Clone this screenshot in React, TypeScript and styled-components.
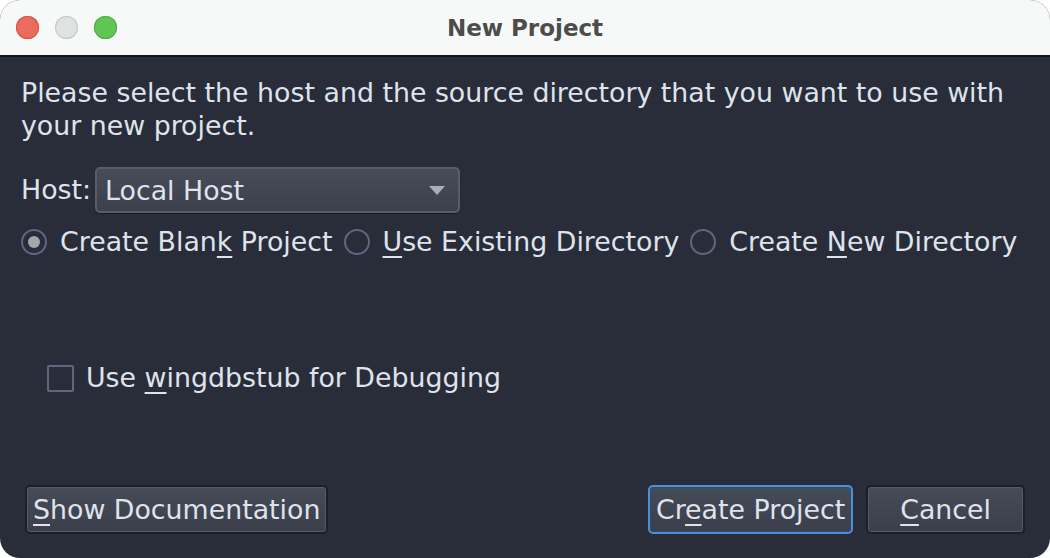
import React from "react";
import styled, { createGlobalStyle, css } from "styled-components";

const GlobalStyle = createGlobalStyle`
	html, body {
		margin: 0;
		padding: 0;
		background: #ffffff;
	}
	body {
		font-family: "DejaVu Sans", "Noto Sans", sans-serif;
	}
`;

const lightColors = {
	close: { fill: "#ec6a5e", ring: "#d4574c" },
	min: { fill: "#e0e1e1", ring: "#c6c7c7" },
	zoom: { fill: "#61c554", ring: "#4fae44" },
};

type LightKind = keyof typeof lightColors;

export default function App() {
	const [mode, setMode] = React.useState("blank");
	const [useStub, setUseStub] = React.useState(false);

	return (
		<>
			<GlobalStyle />
			<Window>
				<TitleBar>
					<Lights>
						<Light $kind="close" />
						<Light $kind="min" />
						<Light $kind="zoom" />
					</Lights>
					<Title>New Project</Title>
					<span />
				</TitleBar>
				<Body>
					<Description>
						Please select the host and the source directory that you want to use with
						your new project.
					</Description>
					<HostRow>
						<FieldLabel>Host:</FieldLabel>
						<Dropdown>
							<span>Local Host</span>
							<Caret />
						</Dropdown>
					</HostRow>
					<RadioRow>
						<Choice onClick={() => setMode("blank")}>
							<Radio $checked={mode === "blank"} />
							<span>
								Create Blan<Key>k</Key> Project
							</span>
						</Choice>
						<Choice onClick={() => setMode("existing")}>
							<Radio $checked={mode === "existing"} />
							<span>
								<Key>U</Key>se Existing Directory
							</span>
						</Choice>
						<Choice onClick={() => setMode("new")}>
							<Radio $checked={mode === "new"} />
							<span>
								Create <Key>N</Key>ew Directory
							</span>
						</Choice>
					</RadioRow>
					<CheckRow onClick={() => setUseStub(!useStub)}>
						<CheckBox $checked={useStub} />
						<span>
							Use <Key>w</Key>ingdbstub for Debugging
						</span>
					</CheckRow>
					<Footer>
						<Button>
							<Key>S</Key>how Documentation
						</Button>
						<ButtonGroup>
							<Button $primary>
								Cr<Key>e</Key>ate Project
							</Button>
							<Button $wide>
								<Key>C</Key>ancel
							</Button>
						</ButtonGroup>
					</Footer>
				</Body>
			</Window>
		</>
	);
}

const Window = styled.div`
	width: 1050px;
	height: 558px;
	display: flex;
	flex-direction: column;
	border-radius: 20px;
	overflow: hidden;
	background: #282d39;
`;

const TitleBar = styled.div`
	height: 55px;
	flex-shrink: 0;
	display: grid;
	grid-template-columns: 1fr auto 1fr;
	align-items: center;
	background: #f7f8f8;
	border-bottom: 2px solid #11141b;
`;

const Lights = styled.div`
	display: flex;
	gap: 16px;
	padding-left: 16px;
`;

const Light = styled.span<{ $kind: LightKind }>`
	width: 23px;
	height: 23px;
	border-radius: 50%;
	background: ${(p) => lightColors[p.$kind].fill};
	box-shadow: inset 0 0 0 1px ${(p) => lightColors[p.$kind].ring};
`;

const Title = styled.div`
	font-size: 23px;
	font-weight: bold;
	color: #4c4c4c;
`;

const Body = styled.div`
	flex: 1;
	display: flex;
	flex-direction: column;
	padding: 19px 25px 24px 21px;
	color: #dfe3ec;
	font-size: 26.8px;
`;

const Description = styled.p`
	margin: 0;
	line-height: 33px;
`;

const HostRow = styled.div`
	display: flex;
	align-items: center;
	gap: 4px;
	margin-top: 25px;
`;

const FieldLabel = styled.span`
	line-height: 32px;
`;

const Dropdown = styled.div`
	width: 365px;
	height: 46px;
	box-sizing: border-box;
	display: flex;
	align-items: center;
	justify-content: space-between;
	padding: 0 13px 0 8px;
	border-radius: 5px;
	border: 2px solid #585d68;
	background: linear-gradient(#474c59, #3b404c);
	box-shadow: 0 1px 1px rgba(0, 0, 0, 0.35);
`;

const Caret = styled.span`
	width: 0;
	height: 0;
	border-left: 8px solid transparent;
	border-right: 8px solid transparent;
	border-top: 9px solid #a9adb7;
`;

const RadioRow = styled.div`
	display: flex;
	align-items: center;
	gap: 11px;
	margin-top: 11px;
`;

const Choice = styled.label`
	display: flex;
	align-items: center;
	gap: 13px;
	line-height: 36px;
	cursor: pointer;
`;

const Radio = styled.span<{ $checked?: boolean }>`
	width: 26px;
	height: 26px;
	box-sizing: border-box;
	border-radius: 50%;
	border: 2px solid #5c6780;
	display: flex;
	align-items: center;
	justify-content: center;

	${(p) =>
		p.$checked &&
		css`
			&::after {
				content: "";
				width: 12px;
				height: 12px;
				border-radius: 50%;
				background: #a3a6ad;
			}
		`}
`;

const CheckRow = styled.label`
	display: flex;
	align-items: center;
	gap: 12px;
	margin-top: 100px;
	margin-left: 26px;
	line-height: 36px;
	cursor: pointer;
`;

const CheckBox = styled.span<{ $checked?: boolean }>`
	width: 27px;
	height: 27px;
	box-sizing: border-box;
	border: 2px solid #5c6780;
	border-radius: 2px;
	background: ${(p) => (p.$checked ? "#5c6780" : "transparent")};
`;

const Footer = styled.div`
	margin-top: auto;
	display: flex;
	justify-content: space-between;
	align-items: center;
	padding-left: 4px;
`;

const ButtonGroup = styled.div`
	display: flex;
	gap: 13px;
`;

const Button = styled.button<{ $primary?: boolean; $wide?: boolean }>`
	height: 49px;
	box-sizing: border-box;
	padding: ${(p) => (p.$wide ? "0 32px" : "0 6px")};
	font-family: inherit;
	font-size: 26.8px;
	color: #dfe3ec;
	border-radius: 5px;
	background: linear-gradient(#464b58, #3a3f4b);
	border: 2px solid ${(p) => (p.$primary ? "#4b8fd6" : "#1c1f26")};
	box-shadow: inset 0 0 0 1px ${(p) => (p.$primary ? "#2f4a6a" : "#555a65")};
	cursor: pointer;
`;

const Key = styled.u`
	text-decoration-thickness: 2px;
	text-underline-offset: 5px;
`;
